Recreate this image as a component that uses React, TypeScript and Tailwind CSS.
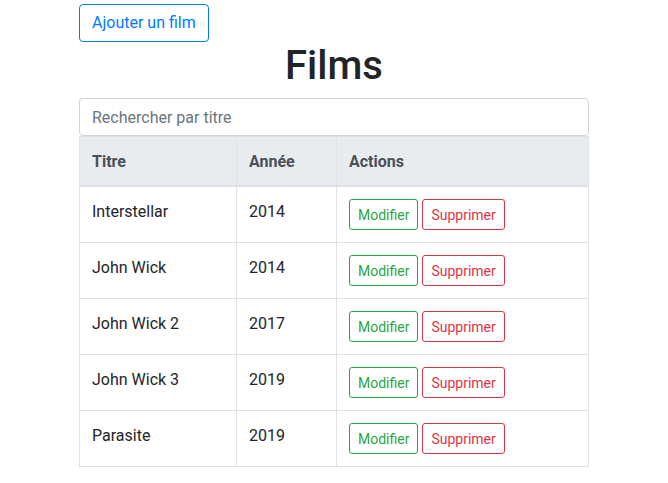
import React from "react";

const films = [
  { titre: "Interstellar", annee: "2014" },
  { titre: "John Wick", annee: "2014" },
  { titre: "John Wick 2", annee: "2017" },
  { titre: "John Wick 3", annee: "2019" },
  { titre: "Parasite", annee: "2019" },
];

export default function App() {
  return (
    <div
      className="min-h-screen bg-white text-[#212529] text-[16px] leading-[1.5]"
      style={{ fontFamily: "Roboto, 'Liberation Sans', sans-serif" }}
    >
      <div className="mx-auto w-[540px] px-[15px]">
        <div className="pt-1">
          <button className="rounded-[4px] border border-[#007bff] bg-white px-[12px] py-[6px] text-[16px] leading-[24px] text-[#007bff]">
            Ajouter un film
          </button>
        </div>
        <h1 className="mb-2 text-center text-[40px] font-medium leading-[48px]">Films</h1>
        <input
          type="text"
          placeholder="Rechercher par titre"
          className="block h-[38px] w-full rounded-[4px] border border-[#ced4da] px-[12px] py-[6px] text-[16px] leading-[24px] text-[#495057] placeholder:text-[#6c757d] outline-none"
        />
        <table className="w-full border-collapse border border-[#dee2e6] text-left">
          <thead>
            <tr className="bg-[#e9ecef] text-[#495057]">
              <th className="w-[157px] border border-b-2 border-[#dee2e6] px-[12px] pt-[13px] pb-[11px] align-bottom font-bold leading-[24px]">Titre</th>
              <th className="w-[100px] border border-b-2 border-[#dee2e6] px-[12px] pt-[13px] pb-[11px] align-bottom font-bold leading-[24px]">Année</th>
              <th className="border border-b-2 border-[#dee2e6] px-[12px] pt-[13px] pb-[11px] align-bottom font-bold leading-[24px]">Actions</th>
            </tr>
          </thead>
          <tbody>
            {films.map((f) => (
              <tr key={f.titre}>
                <td className="border border-[#dee2e6] px-[12px] pt-[13px] pb-[11px] align-top leading-[24px]">{f.titre}</td>
                <td className="border border-[#dee2e6] px-[12px] pt-[13px] pb-[11px] align-top leading-[24px]">{f.annee}</td>
                <td className="border border-[#dee2e6] p-[12px] align-top">
                  <div className="flex gap-[4px]">
                    <button className="rounded-[3px] border border-[#28a745] px-[8px] pt-[5px] pb-[3px] text-[14px] leading-[21px] text-[#28a745]">
                      Modifier
                    </button>
                    <button className="rounded-[3px] border border-[#dc3545] px-[8px] pt-[5px] pb-[3px] text-[14px] leading-[21px] text-[#dc3545]">
                      Supprimer
                    </button>
                  </div>
                </td>
              </tr>
            ))}
          </tbody>
        </table>
      </div>
    </div>
  );
}
